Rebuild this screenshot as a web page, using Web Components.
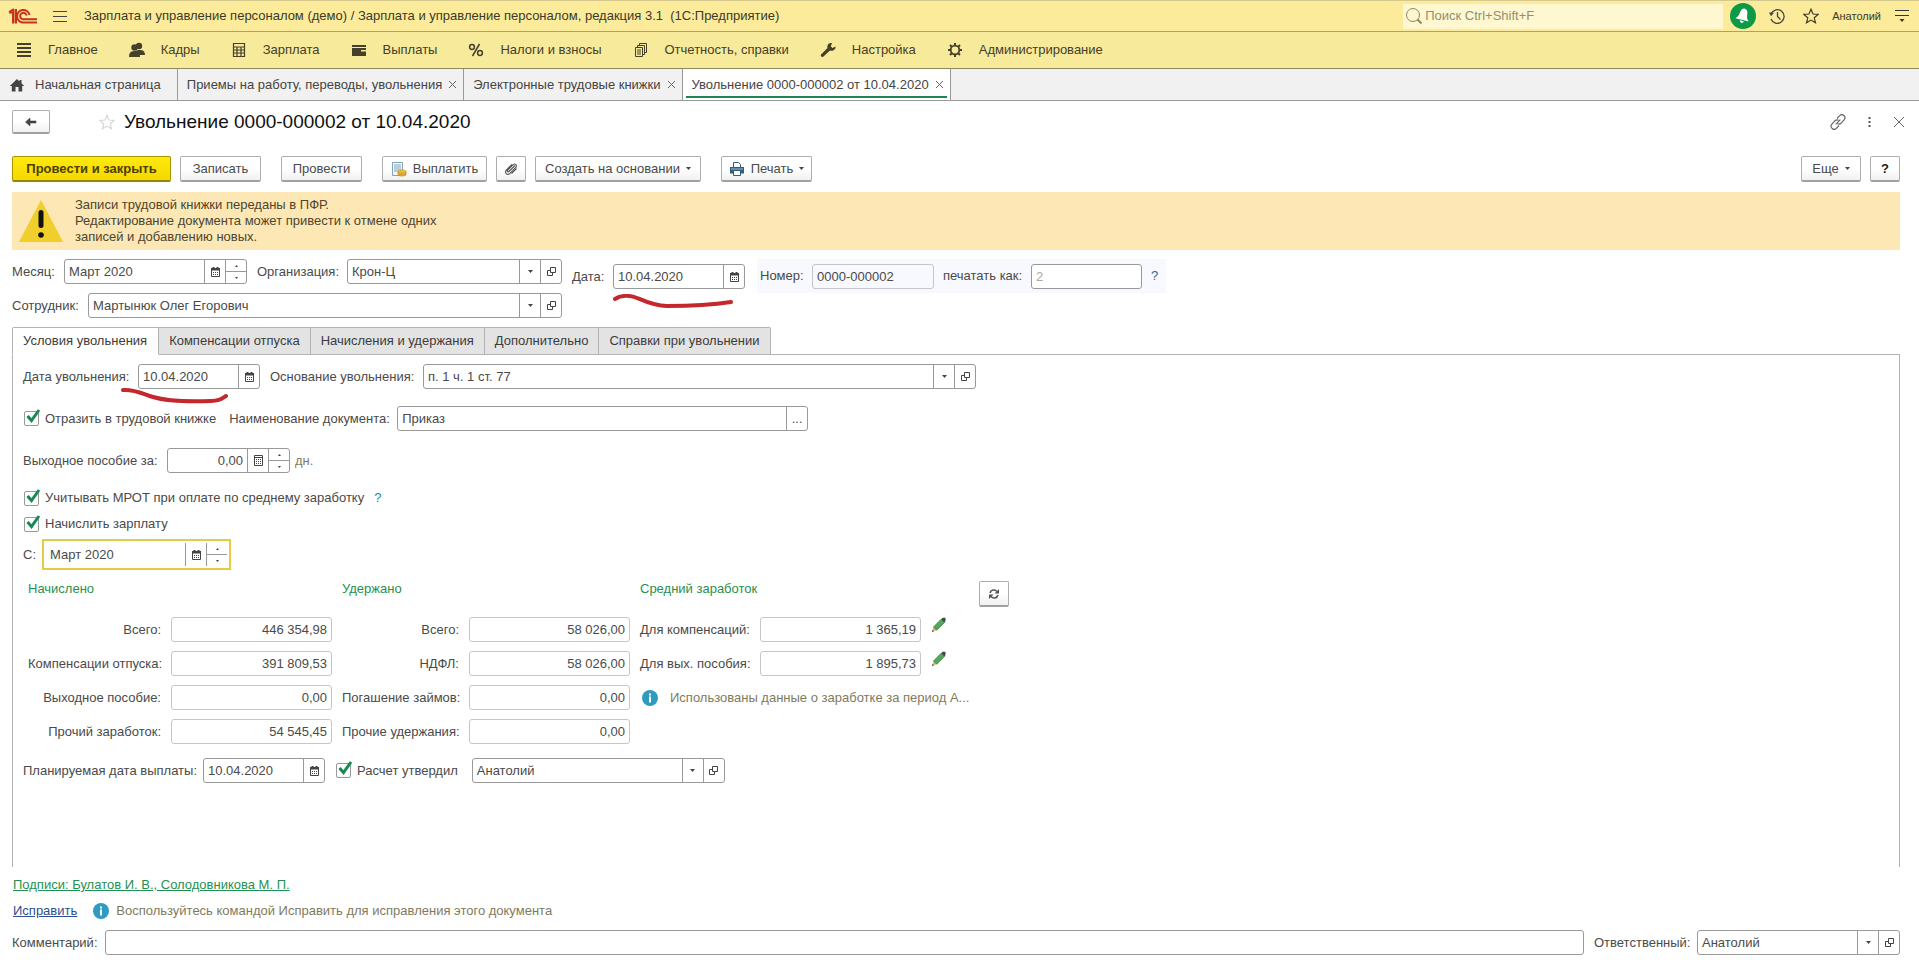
<!DOCTYPE html>
<html lang="ru">
<head>
<meta charset="utf-8">
<title>Увольнение 0000-000002 от 10.04.2020</title>
<style>
html, body { margin: 0; height: 100%; background: #fff; }
body { font: 13px/16px "Liberation Sans", Arial, sans-serif; color: #4a4a4a; }
</style>
</head>
<body>
<app-window></app-window>
<script>
const ICONS = {
  logo: [30, 18, `<g fill="none" stroke="#c8321f" stroke-width="2"><path d="M1 5.500h4v11M5.500 2v14.500M1 5l5-3M8 2v14.500"/><path d="M21.500 8A6.300 6.300 0 1 0 16 15.500h13"/><path d="M18.500 8.500A3.200 3.200 0 1 0 16 12.200h13"/></g>`],
  burger: [16, 16, `<path d="M1 3.500h14M1 8.500h14M1 13.500h14" stroke="#444" fill="none"/>`],
  search: [18, 18, `<circle cx="8" cy="8" r="6.500" fill="none" stroke="#8d8862"/><path d="M12.500 12.500l4 4" stroke="#8d8862" stroke-width="2"/>`],
  bell: [26, 26, `<circle cx="13" cy="13" r="13" fill="#0c9a47"/><g transform="rotate(14 13 13)" fill="#fff"><path d="M13 5.500c-3 0-3.600 3-3.900 6-.2 2.500-1.300 4-2.900 5.500h13.600c-1.600-1.500-2.700-3-2.900-5.500-.3-3-.9-6-3.900-6z"/><path d="M11 18h4a2 2 0 0 1-4 0z"/></g>`],
  history: [16, 16, `<path d="M2.200 5.500A6.800 6.800 0 1 1 2 11M8.500 4v4.500l3 3" fill="none" stroke="#444" stroke-width="1.300"/><path d="M0 4.500l5 .2-3 3.500z" fill="#444"/>`],
  star: [16, 16, `<path d="M8 1.200l2 4.800 5.200.4-4 3.400 1.300 5L8 12.100l-4.500 2.700 1.300-5-4-3.400L6 6z" fill="none" stroke="currentColor" stroke-width="1.200"/>`],
  more: [14, 14, `<path d="M0 1.500h14M0 6.500h14" stroke="#333" fill="none"/><path d="M4.500 10h5l-2.500 3z" fill="#333"/>`],
  main: [16, 16, `<path d="M1 2h14M1 6h14M1 10h14M1 14h14" stroke="#45402a" stroke-width="2"/>`],
  people: [16, 16, `<g fill="#45402a"><circle cx="10" cy="4" r="3.200"/><path d="M6 9.500c1-2 7-2 8.500-.5.900 1 1.500 2.500 1.500 4H8z"/><circle cx="5.500" cy="5.500" r="3.200"/><path d="M0 15c0-3 .8-6 5.500-6S11 12 11 15z"/></g>`],
  calc: [16, 16, `<path d="M2.500 1.500h11v13h-11zM2.500 5h11M2.500 8h11M2.500 11h11M6 5v9.500M10 5v9.500" fill="none" stroke="#45402a" stroke-width="1.200"/>`],
  wallet: [16, 16, `<path d="M1 3h14v2H1zM1 6h14v8H1z" fill="#45402a"/><path d="M10 8h5v1.500h-5z" fill="#f7ea9b"/>`],
  percent: [16, 16, `<g fill="none" stroke="#45402a" stroke-width="1.500"><circle cx="4" cy="5" r="2.400"/><circle cx="12" cy="11" r="2.400"/><path d="M11.500 2l-7 12"/></g>`],
  docs: [16, 16, `<g fill="none" stroke="#45402a"><path d="M2.500 5.500h7v9h-7zM4.500 5v-1.500h7v9H10M6.500 3V1.500h7v9H12M4 8h4M4 10h4M4 12h4"/></g>`],
  wrench: [16, 16, `<path d="M15.500 4.500l-3 1.500-1.800-1.800L12 1.200C9 .6 6.600 3 7.500 6L1 12.500c-1 1.200.8 3.200 2.200 2.200L10 8.500c3 1 6-1.200 5.500-4z" fill="#45402a"/>`],
  gear: [16, 16, `<circle cx="8" cy="8" r="4.300" fill="none" stroke="#45402a" stroke-width="1.800"/><path d="M8 1v2.500M8 12.500V15M1 8h2.500M12.500 8H15M3 3l2 2M11 11l2 2M13 3l-2 2M5 11l-2 2" stroke="#45402a" stroke-width="2"/>`],
  home: [16, 16, `<path d="M8 2L.8 9h2v5.500h3.700V10h3v4.500h3.700V9h2L12.500 6.300V3h-2v1.400z" fill="#444"/>`],
  close: [9, 9, `<path d="M1 1l7 7M8 1l-7 7" stroke="#666" fill="none"/>`],
  closebig: [12, 12, `<path d="M1 1l10 10M11 1L1 11" stroke="#666" fill="none"/>`],
  back: [14, 12, `<path d="M6 2L1.500 6 6 10V7h6V5H6z" fill="#444" stroke="#444" stroke-width=".6"/>`],
  link: [16, 16, `<g fill="none" stroke="#666" stroke-width="1.200"><path d="M7 4.500l2.500-2.700a3 3 0 0 1 4.600 4L11 9.300a3 3 0 0 1-3.500.5M9 11.500l-2.500 2.700a3 3 0 0 1-4.600-4L5 6.700a3 3 0 0 1 3.500-.5M5.700 10.300l4.600-4.600"/></g>`],
  dots: [3, 12, `<path d="M.5 1h2v2h-2zM.5 5h2v2h-2zM.5 9h2v2h-2z" fill="#555"/>`],
  pay: [16, 16, `<path d="M1.500 1.500h10v13h-10z" fill="#f4f9fd" stroke="#7fa3bd"/><path d="M3 4h7M3 6h7M3 8h7M3 10h5" stroke="#7fa3bd"/><path d="M7 10.500c0-2 8-2 8 0v3c0 2-8 2-8 0z" fill="#f0c244" stroke="#b98717" stroke-width=".7"/><path d="M7 11c1 1.600 7 1.600 8 0M7 12.700c1 1.600 7 1.600 8 0" fill="none" stroke="#b98717" stroke-width=".7"/>`],
  clip: [14, 14, `<g fill="none" stroke="#555" stroke-width="1.100"><path d="M11 3.500L5 9.500c-1 1-2.300-.2-1.300-1.300L9 2.800c2-2 4.700.6 2.800 2.600L6 11.300c-2.800 2.600-6-.8-3.500-3.500L8 2.300"/><path d="M12.500 6.500L7.500 11.500"/></g>`],
  print: [16, 16, `<path d="M4.500 6V1.500h5l2 2V6" fill="#fff" stroke="#2f5f7d"/><path d="M1 6h14v6.500H1z" fill="#2f5f7d"/><path d="M2 8h12" stroke="#9dbccd"/><path d="M4.500 9.500h7v5h-7z" fill="#fff" stroke="#2f5f7d"/>`],
  down: [5, 3, `<path d="M0 0h5L2.500 3z" fill="#444"/>`],
  up: [3, 2, `<path d="M0 2h3L1.500 0z" fill="#444"/>`],
  dn: [3, 2, `<path d="M0 0h3L1.500 2z" fill="#444"/>`],
  cal: [9, 10, `<path d="M.5 1.500h8v8h-8z" fill="#fff" stroke="#444"/><path d="M0 1h9v2.500H0zM1.500 0h2v1h-2zM5.500 0h2v1h-2z" fill="#444"/><path d="M2 5.500h1M4 5.500h1M6 5.500h1M2 7.500h1M4 7.500h1M6 7.500h1" stroke="#444"/>`],
  num: [9, 11, `<path d="M.5 .5h8v10h-8zM.5 2.500h8" fill="none" stroke="#444"/><path d="M2 4.500h1M4 4.500h1M6 4.500h1M2 6.500h1M4 6.500h1M6 6.500h1M2 8.500h1M4 8.500h1M6 8.500h1" stroke="#444"/>`],
  open: [9, 9, `<path d="M3.500 .5h5v5h-5zM3 3.500H.5v5H5.500V6" fill="none" stroke="#444"/>`],
  refresh: [12, 12, `<g fill="none" stroke="#555" stroke-width="1.600"><path d="M2 5A4 4 0 0 1 9 3.500M10 7A4 4 0 0 1 3 8.500"/></g><path d="M11 1v4.500H6.500zM1 11V6.500h4.500z" fill="#555"/>`],
  pencil: [16, 16, `<path d="M1 15l1.500-5 3.200 3.200z" fill="#e2b177"/><path d="M1 15l.6-2 1.300 1.300z" fill="#333"/><path d="M2.500 10l7.700-7.800 3.300 3.200-7.800 7.800z" fill="#55a85a" stroke="#2e7338" stroke-width=".7"/><path d="M10.200 2.200l1.500-1.400h2.800v3L13.500 5.400z" fill="#3c4a4a"/>`],
  info: [16, 16, `<circle cx="8" cy="8" r="8" fill="#2f9bc1"/><path d="M7 3.500h2v2H7zM7 6.500h2v6H7z" fill="#fff"/>`],
  warn: [46, 44, `<path d="M23 1l22 42H1z" fill="#f0ce2b"/><rect x="20.500" y="11" width="5" height="18" rx="2.500" fill="#111"/><circle cx="23" cy="36" r="2.800" fill="#111"/>`],
  mark1: [122, 16, `<path d="M2 5C8 1 17 1 24 4S42 12 54 12S92 12 118 8" fill="none" stroke="#c4282c" stroke-width="4" stroke-linecap="round"/>`],
  mark2: [110, 18, `<path d="M2 3C14 2 22 7 32 10S62 15 90 14C98 14 100 12 105 9" fill="none" stroke="#c4282c" stroke-width="4" stroke-linecap="round"/>`]
};
const icon = n => `<app-icon name="${n}"></app-icon>`;

function define(name, render) {
  customElements.define(name, class extends HTMLElement {
    constructor() { super(); this.attachShadow({ mode: 'open' }); }
    connectedCallback() {
      this.shadowRoot.innerHTML = '<style>*{box-sizing:border-box}:host{box-sizing:border-box}button,input,select{font:inherit;color:inherit;margin:0}</style>' + render(this);
    }
  });
}

define('app-icon', el => {
  const [w, h, body] = ICONS[el.getAttribute('name')];
  return `<style>:host{display:block;flex:none}svg{display:block}</style>
  <svg width="${w}" height="${h}" viewBox="0 0 ${w} ${h}" aria-hidden="true">${body}</svg>`;
});

define('title-bar', () => `<style>
:host{display:flex;align-items:center;height:32px;padding:0 10px 0 8px;background:#fbeb9b;border-top:1px solid #d3c98c;border-bottom:1px solid #aaa06a;color:#3d3a28}
button{border:0;background:none;padding:0;display:block}
.menu{margin:0 16px 0 14px}
.search{display:flex;align-items:center;gap:2px;width:320px;height:25px;margin-left:auto;padding-left:2px;background:#fef7cf}
input{flex:1;min-width:0;border:0;background:none;padding:0;outline:0}
input::placeholder{color:#948f70;opacity:1}
.right{display:flex;align-items:center;margin-left:7px}
.hist{margin:0 18px 0 13px}.user{font-size:11px;margin:0 14px 0 13px}
</style>${icon('logo')}<button class="menu" aria-label="Меню">${icon('burger')}</button>
<span>Зарплата и управление персоналом (демо) / Зарплата и управление персоналом, редакция 3.1&nbsp; (1С:Предприятие)</span>
<div class="search">${icon('search')}<input type="text" placeholder="Поиск Ctrl+Shift+F" aria-label="Поиск"></div>
<div class="right"><button aria-label="Уведомления">${icon('bell')}</button><button class="hist" aria-label="История">${icon('history')}</button><button aria-label="Избранное">${icon('star')}</button><span class="user">Анатолий</span><button aria-label="Сервис">${icon('more')}</button></div>`);

define('section-menu', () => `<style>
:host{display:block;background:#f7ea9b;border-bottom:1px solid #8d8a63;color:#45402a}
nav{display:flex;gap:31px;height:36px;padding:0 16px}
a{display:flex;align-items:center;gap:16px;color:inherit;text-decoration:none}
</style><nav>${[['main', 'Главное'], ['people', 'Кадры'], ['calc', 'Зарплата'], ['wallet', 'Выплаты'], ['percent', 'Налоги и взносы'], ['docs', 'Отчетность, справки'], ['wrench', 'Настройка'], ['gear', 'Администрирование']]
  .map(([i, t]) => `<a href="#">${icon(i)}<span>${t}</span></a>`).join('')}</nav>`);

define('window-tabs', () => `<style>
:host{display:flex;height:32px;background:#f1f1f1;border-bottom:1px solid #999;color:#444}
.tab{position:relative;display:flex;align-items:center;gap:6px;padding:0 6px 0 9px;border-right:1px solid #999}
.home{gap:10px;padding:0 16px 0 9px}
a{color:inherit;text-decoration:none}button{border:0;padding:0;background:none}
.active{background:#fff}.active::after{content:"";position:absolute;left:3px;right:3px;bottom:2px;height:2px;background:#1f8455}
</style><div class="tab home">${icon('home')}<a href="#">Начальная страница</a></div>
${['Приемы на работу, переводы, увольнения', 'Электронные трудовые книжки', 'Увольнение 0000-000002 от 10.04.2020']
  .map((t, i) => `<div class="tab ${i == 2 ? 'active' : ''}"><a href="#">${t}</a><button aria-label="Закрыть">${icon('close')}</button></div>`).join('')}`);

const BTN = `button{display:inline-flex;align-items:center;justify-content:center;border:1px solid #adadad;border-bottom:2px solid #a0a0a0;border-radius:2px;background:linear-gradient(#fff 50%,#f1f1f1);padding:0}`;

define('doc-heading', () => `<style>${BTN}
:host{display:flex;align-items:center;padding:9px 14px 0 12px}
.back{width:38px;height:24px;margin-right:49px}
.fav{color:#d6d6d6;border:0;background:none;margin-right:9px}
h1{margin:0;font-size:19px;line-height:24px;font-weight:400;color:#111}
.tools{display:flex;align-items:center;gap:22px;margin-left:auto}.tools button{border:0;background:none}
</style><button class="back" aria-label="Назад">${icon('back')}</button><button class="fav" aria-label="В избранное">${icon('star')}</button>
<h1>Увольнение 0000-000002 от 10.04.2020</h1>
<div class="tools"><button aria-label="Ссылка">${icon('link')}</button><button aria-label="Ещё">${icon('dots')}</button><button aria-label="Закрыть">${icon('closebig')}</button></div>`);

define('tool-button', el => `<style>${BTN}
:host{display:block}
button{width:100%;height:26px;gap:6px;padding:0;white-space:nowrap}
:host([primary]) button{background:linear-gradient(#ffe90d,#f5d800);border-color:#a89500;border-bottom-color:#968500;font-weight:700;color:#4c4000}
:host([strong]) button{font-weight:700;color:#222}
</style><button>${el.getAttribute('icon') ? icon(el.getAttribute('icon')) : ''}<slot></slot>${el.hasAttribute('drop') ? icon('down') : ''}</button>`);

define('command-bar', () => `<style>
:host{display:flex;padding:22px 19px 10px 12px}
tool-button+tool-button{margin-left:9px}
:host tool-button.sep{margin-left:20px}.end{margin-left:auto;display:flex}
.w30{width:30px}.w60{width:60px}.w82{width:81px}.w90{width:91px}.w105{width:105px}.w160{width:159px}.w166{width:166px}
</style><tool-button class="w160" primary>Провести и закрыть</tool-button><tool-button class="w82">Записать</tool-button>
<tool-button class="w82 sep">Провести</tool-button><tool-button class="w105 sep" icon="pay">Выплатить</tool-button><tool-button class="w30" icon="clip" aria-label="Файлы"></tool-button><tool-button class="w166" drop>Создать на основании</tool-button><tool-button class="w90 sep" icon="print" drop>Печать</tool-button>
<div class="end"><tool-button class="w60" drop>Еще</tool-button><tool-button class="w30" strong>?</tool-button></div>`);

define('warning-banner', () => `<style>
:host{display:flex;align-items:center;gap:11px;margin:0 19px 9px 12px;padding:5px 6px;background:#fde7b4;color:#4d452f}
p{margin:0}
</style>${icon('warn')}<p>Записи трудовой книжки переданы в ПФР.<br>Редактирование документа может привести к отмене одних<br>записей и добавлению новых.</p>`);

/* Labelled input; `parts` lists the buttons at its right edge. */
define('form-field', el => {
  const a = n => el.getAttribute(n) || '';
  const parts = a('parts').split(' ').filter(Boolean);
  const combo = parts.includes('drop');
  const names = { cal: 'Календарь', num: 'Калькулятор', open: 'Открыть' };
  const cells = parts.map(p => p == 'drop' ? `<span class="cell arrow">${icon('down')}</span>`
    : p == 'spin' ? `<span class="cell spin"><button tabindex="-1" aria-label="Больше">${icon('up')}</button><button tabindex="-1" aria-label="Меньше">${icon('dn')}</button></span>`
    : p == 'dots' ? `<button class="cell" aria-label="Выбрать">...</button>`
    : `<button class="cell" aria-label="${names[p]}">${icon(p)}</button>`).join('');
  const v = a('value');
  return `<style>
:host{display:flex;align-items:center}
label{width:${a('label-width') ? a('label-width') + 'px' : 'auto'};flex:none;white-space:nowrap}
:host([right]) label{text-align:right;padding-right:10px}
.box{position:relative;display:grid;grid-template-columns:1fr ${parts.map(() => '21px').join(' ')};height:25px;width:${a('width') ? a('width') + 'px' : 'auto'};flex:${a('width') ? 'none' : '1'};min-width:0;border:1px solid #999;border-radius:3px;background:#fff}
input,select{grid-row:1;grid-column:1/${combo ? 3 : 2};min-width:0;width:100%;height:100%;border:0;padding:0 4px;background:none;appearance:none;outline:0;text-overflow:ellipsis}
input::placeholder{color:#aaa;opacity:1}
.cell{grid-row:1;display:flex;align-items:center;justify-content:center;border:0;border-left:1px solid #999;background:none;padding:0}
.arrow{grid-column:2;pointer-events:none}
.spin{flex-direction:column;align-items:stretch}
.spin button{flex:1;display:flex;align-items:center;justify-content:center;border:0;background:none;padding:0}.spin button+button{border-top:1px solid #999}
:host([num]) input{text-align:right}
:host([soft]) .box{border-color:#c6c6c6}
:host([plain]) .box{background:none}
:host([focused]) .box{height:31px;border:2px solid #e6cb45;border-radius:0;padding:2px}
.mark{position:absolute;pointer-events:none}
.mark1{left:-1px;top:29px}.mark2{left:-18px;top:22px}
</style><label for="f">${a('label')}</label><div class="box">${combo ? `<select id="f"><option>${v}</option></select>` : `<input id="f" type="text" value="${v}" placeholder="${a('placeholder')}" ${el.hasAttribute('soft') ? 'readonly' : ''}>`}${cells}${a('mark') ? `<app-icon class="mark ${a('mark')}" name="${a('mark')}"></app-icon>` : ''}</div>`;
});

define('check-field', () => `<style>
:host{display:block}label{display:flex;align-items:center;gap:6px;white-space:nowrap}
.b{position:relative;width:15px;height:15px}
input{appearance:none;display:block;width:15px;height:15px;border:1px solid #999;border-radius:2px;background:#fff}
svg{position:absolute;left:2px;top:-2px;pointer-events:none}
</style><label><span class="b"><input type="checkbox" checked><svg width="15" height="14"><path d="M1.500 7l4 4.500L13 1" fill="none" stroke="#178a55" stroke-width="3"/></svg></span><slot></slot></label>`);

define('doc-requisites', () => `<style>
:host{display:flex;gap:10px;padding:0 12px 9px}
.left{display:grid;gap:9px;width:550px}.row{display:flex;gap:10px}.fill{flex:1}
.date{margin-top:5px;align-self:start}
.number{display:flex;align-items:center;gap:9px;height:34px;margin-left:2px;padding:0 8px 0 3px;background:#f7f9fe}
a{color:#1a6f9a;text-decoration:none}
</style><div class="left"><div class="row"><form-field label="Месяц:" label-width="52" width="183" value="Март 2020" parts="cal spin"></form-field><form-field class="fill" label="Организация:" label-width="90" value="Крон-Ц" parts="drop open"></form-field></div>
<form-field label="Сотрудник:" label-width="76" value="Мартынюк Олег Егорович" parts="drop open"></form-field></div>
<form-field class="date" label="Дата:" label-width="41" width="132" value="10.04.2020" parts="cal" mark="mark1"></form-field>
<div class="number"><form-field soft plain label="Номер:" label-width="52" width="122" value="0000-000002"></form-field><form-field label="печатать как:" label-width="88" width="111" placeholder="2"></form-field><a href="#">?</a></div>`);

define('page-tabs', () => `<style>
:host{display:flex;height:28px;margin-bottom:-1px;color:#3c3c3c;position:relative}
button{height:100%;border:1px solid #b3b3b3;border-left-width:0;background:#e3e3e3;padding:0 10px 1px;white-space:nowrap}
button[aria-selected=true]{border-left-width:1px;border-bottom-color:#fff;background:#fff;border-radius:2px 0 0 0;padding:0 11px 1px 10px}
button:last-child{border-radius:0 2px 0 0}
</style>${['Условия увольнения', 'Компенсации отпуска', 'Начисления и удержания', 'Дополнительно', 'Справки при увольнении'].map((t, i) => `<button role="tab" aria-selected="${!i}">${t}</button>`).join('')}`);

define('totals-grid', () => {
  const f = (l, v, lw, w, r = 'right') => `<form-field ${r} soft num label="${l}" label-width="${lw}" width="${w}" value="${v}"></form-field>`;
  return `<style>
:host{display:flex;gap:10px;padding-left:5px}
section{display:grid;grid-template-rows:27px;grid-auto-rows:25px;row-gap:9px;align-content:start}
h2{margin:0;font:inherit;color:#1f9150}
.pen{display:flex;gap:10px}.pen button{border:0;background:none;padding:0;align-self:start}
.note{display:flex;align-items:center;gap:12px;padding-left:2px;color:#7f7a5e;white-space:nowrap}
tool-button{width:30px}
</style><section><h2>Начислено</h2>${f('Всего:', '446&nbsp;354,98', 143, 161)}${f('Компенсации отпуска:', '391&nbsp;809,53', 143, 161)}${f('Выходное пособие:', '0,00', 143, 161)}${f('Прочий заработок:', '54&nbsp;545,45', 143, 161)}</section>
<section><h2>Удержано</h2>${f('Всего:', '58&nbsp;026,00', 127, 161)}${f('НДФЛ:', '58&nbsp;026,00', 127, 161)}${f('Погашение займов:', '0,00', 127, 161)}${f('Прочие удержания:', '0,00', 127, 161)}</section>
<section><h2>Средний заработок</h2><div class="pen">${f('Для компенсаций:', '1&nbsp;365,19', 120, 161, '')}<button aria-label="Изменить">${icon('pencil')}</button></div><div class="pen">${f('Для вых. пособия:', '1&nbsp;895,73', 120, 161, '')}<button aria-label="Изменить">${icon('pencil')}</button></div><div class="note">${icon('info')}<span>Использованы данные о заработке за период А...</span></div></section>
<tool-button icon="refresh" aria-label="Пересчитать"></tool-button>`;
});

define('dismissal-panel', () => `<style>
:host{display:block;flex:1;margin:0 19px 0 12px;border:1px solid #b3b3b3;border-bottom:0;padding:9px 10px 0}
.row{display:flex;align-items:center;gap:10px;margin-bottom:17px}
.check{height:16px;margin-bottom:10px}.check check-field{margin-left:1px}
.tight{margin-bottom:7px}
a{color:#1a8aa0;text-decoration:none}
.unit{color:#7f7a5e;margin-left:-5px}
.ind{margin-left:1px}.near{gap:13px}.low{margin-top:14px}
totals-grid{margin-top:11px}
</style>
<div class="row"><form-field label="Дата увольнения:" label-width="115" width="122" value="10.04.2020" parts="cal" mark="mark2"></form-field><form-field label="Основание увольнения:" label-width="153" width="553" value="п. 1 ч. 1 ст. 77" parts="drop open"></form-field></div>
<div class="row near"><check-field class="ind">Отразить в трудовой книжке</check-field><form-field label="Наименование документа:" label-width="168" width="411" value="Приказ" parts="dots"></form-field></div>
<div class="row"><form-field num label="Выходное пособие за:" label-width="144" width="123" value="0,00" parts="num spin"></form-field><span class="unit">дн.</span></div>
<div class="row check"><check-field>Учитывать МРОТ при оплате по среднему заработку</check-field><a href="#">?</a></div>
<div class="row check tight"><check-field>Начислить зарплату</check-field></div>
<form-field focused label="С:" label-width="19" width="189" value="Март 2020" parts="cal spin"></form-field>
<totals-grid></totals-grid>
<div class="row low"><form-field label="Планируемая дата выплаты:" label-width="180" width="122" value="10.04.2020" parts="cal"></form-field><check-field class="ind">Расчет утвердил</check-field><form-field label="" label-width="4" width="253" value="Анатолий" parts="drop open"></form-field></div>`);

define('doc-footer', () => `<style>
:host{display:grid;gap:10px;padding:10px 19px 10px 12px}
.sign{color:#1f9150;justify-self:start;margin-left:1px}
.row{display:flex;gap:10px}.hint{align-items:center;height:16px;gap:7px;color:#7f7a5e;margin-bottom:1px}
.hint a{color:#2a4f96;margin:0 9px 0 1px}.fill{flex:1}
</style><a class="sign" href="#">Подписи: Булатов И. В., Солодовникова М. П.</a>
<div class="row hint"><a href="#">Исправить</a>${icon('info')}<span>Воспользуйтесь командой Исправить для исправления этого документа</span></div>
<div class="row"><form-field class="fill" label="Комментарий:" label-width="93"></form-field><form-field label="Ответственный:" label-width="103" width="203" value="Анатолий" parts="drop open"></form-field></div>`);

define('app-window', () => `<style>
:host{display:flex;flex-direction:column;min-height:100vh}
page-tabs{margin-left:12px}
</style><title-bar></title-bar><section-menu></section-menu><window-tabs></window-tabs><doc-heading></doc-heading><command-bar></command-bar><warning-banner></warning-banner><doc-requisites></doc-requisites><page-tabs></page-tabs><dismissal-panel></dismissal-panel><doc-footer></doc-footer>`);
</script>
</body>
</html>
